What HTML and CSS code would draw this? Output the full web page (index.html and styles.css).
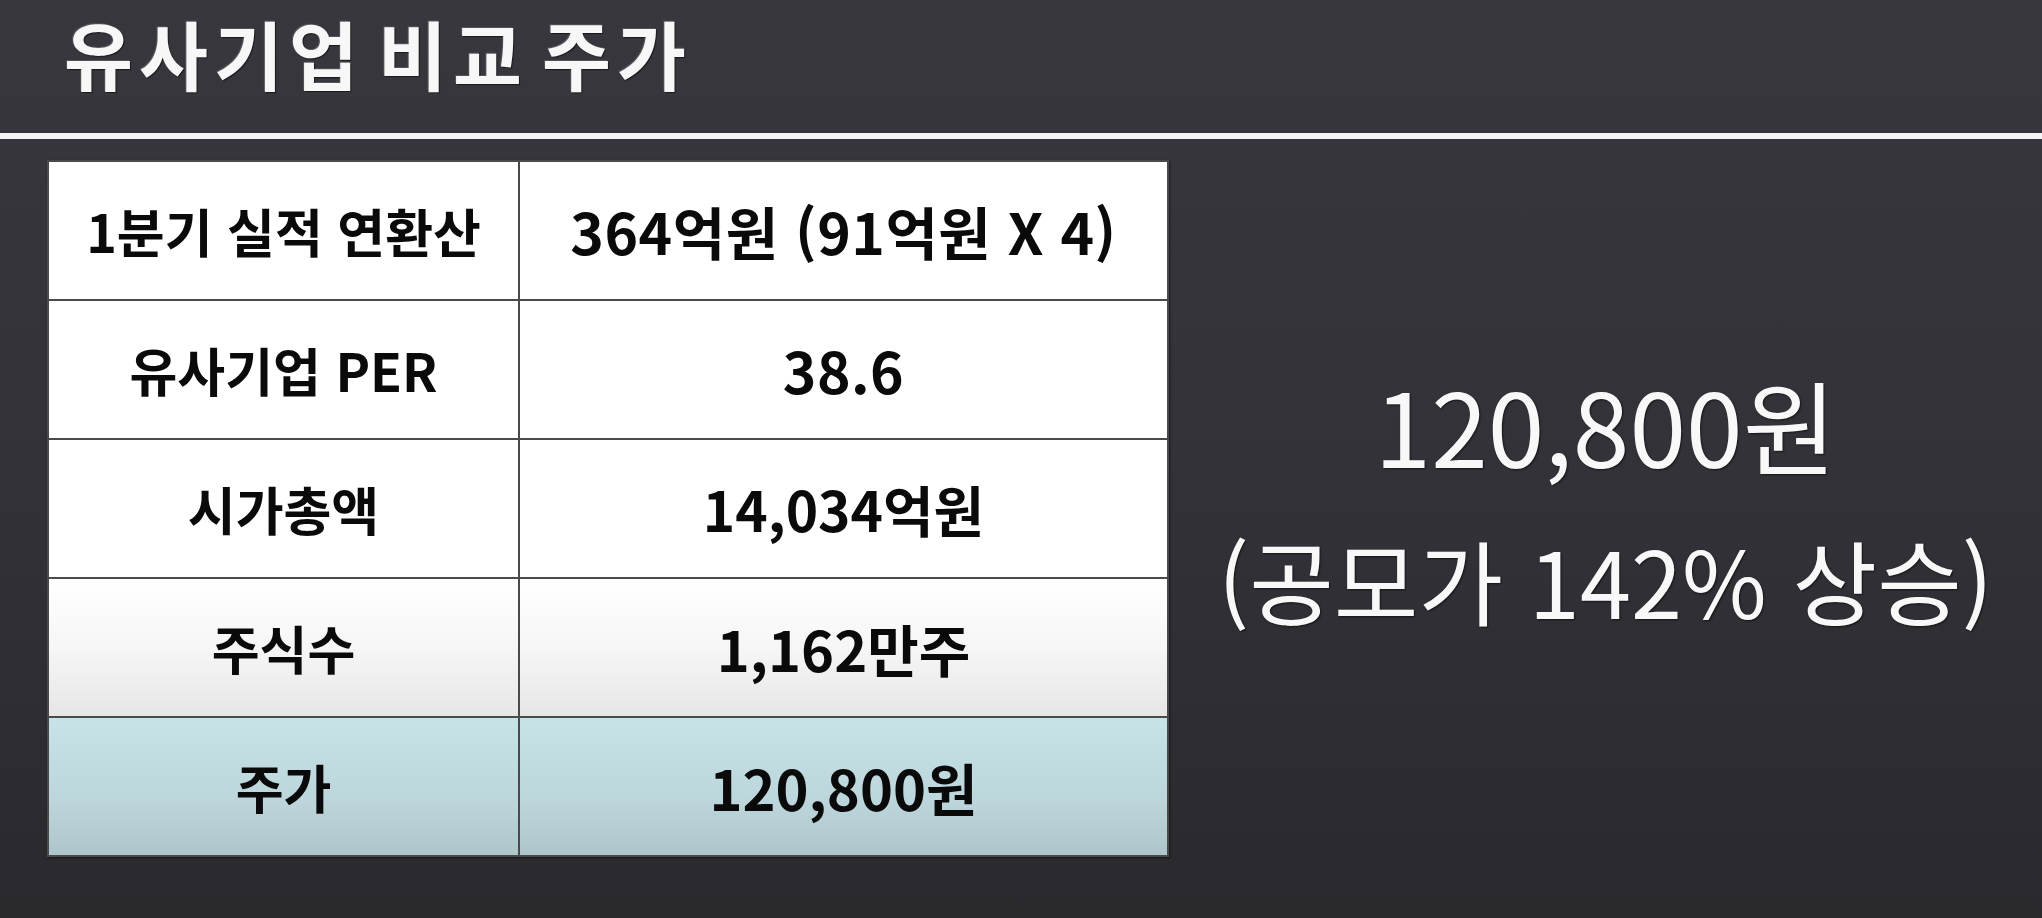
FILE: index.html
```html
<!DOCTYPE html>
<html lang="ko">
<head>
<meta charset="utf-8">
<title>유사기업 비교 주가</title>
<link rel="stylesheet" href="styles.css">
</head>
<body>
<div class="slide">
  <header class="head">
    <h1 class="title">유사기업 비교 주가</h1>
  </header>
  <div class="rule"></div>
  <main class="content">
    <table class="comp">
      <tr class="r1">
        <td class="k">1분기 실적 연환산</td>
        <td class="v v-lite">364억원 (91억원 X 4)</td>
      </tr>
      <tr class="r2">
        <td class="k">유사기업 PER</td>
        <td class="v v-lite">38.6</td>
      </tr>
      <tr class="r3">
        <td class="k">시가총액</td>
        <td class="v">14,034억원</td>
      </tr>
      <tr class="r4">
        <td class="k">주식수</td>
        <td class="v v-narrow">1,162만주</td>
      </tr>
      <tr class="r5">
        <td class="k">주가</td>
        <td class="v v-narrow">120,800원</td>
      </tr>
    </table>
    <div class="result">
      <p class="price">120,800원</p>
      <p class="rise">(공모가 142% 상승)</p>
    </div>
  </main>
</div>
</body>
</html>
```

FILE: styles.css
```css
html, body {
  margin: 0;
  padding: 0;
}
body {
  width: 2042px;
  height: 918px;
  overflow: hidden;
  font-family: "Noto Sans CJK KR", "Noto Sans", sans-serif;
  background: linear-gradient(to bottom, #38373d 0%, #333238 50%, #2a292e 100%);
}
.slide {
  display: flex;
  flex-direction: column;
  height: 918px;
}
.head {
  height: 133px;
  box-sizing: border-box;
  padding: 0 0 0 64px;
}
.title {
  margin: 0;
  font-size: 75px;
  line-height: 1.4;
  font-weight: 700;
  letter-spacing: 6px;
  word-spacing: -13px;
  color: #f7f7f8;
  text-shadow: 1px 1px 1px rgba(0,0,0,0.55), -1px -1px 0 rgba(255,255,255,0.15);
}
.rule {
  height: 6px;
  background: #f4f4f6;
}
.content {
  display: flex;
  align-items: center;
  padding: 21px 0 0 47px;
}
.comp {
  border-collapse: collapse;
  width: 1122px;
  border: 2px solid #1c1c1f;
  background: #fff;
  box-shadow: 1px 1px 2px rgba(0,0,0,0.5);
}
.comp td {
  height: 137px;
  padding: 0;
  border: 2px solid #4a4a4c;
  text-align: center;
  vertical-align: middle;
  color: #0a0a0a;
  font-weight: 700;
  font-size: 52px;
  line-height: 1;
}
.comp td.k {
  width: 469px;
}
.comp td.v {
  font-size: 55px;
}
.comp td.v-lite {
  font-size: 57px;
  letter-spacing: 0.5px;
}
.comp td.v-narrow {
  font-size: 56px;
}
.comp tr.r4 td {
  background: linear-gradient(to bottom, #ffffff 0%, #f6f6f6 50%, #e6e6e7 100%);
}
.comp tr.r5 td {
  background: linear-gradient(to bottom, #c7e3e8 0%, #bcd6db 60%, #aec6ca 100%);
}
.result {
  flex: 1;
  display: flex;
  flex-direction: column;
  align-items: center;
  gap: 38px;
  margin-bottom: 20px;
  color: #f8f8f9;
  text-shadow: 1px 1px 2px rgba(0,0,0,0.6);
}
.result p {
  margin: 0;
  line-height: 1.2;
  font-weight: 400;
}
.result .price {
  font-size: 102px;
}
.result .rise {
  font-size: 92px;
  letter-spacing: 0;
}
```
